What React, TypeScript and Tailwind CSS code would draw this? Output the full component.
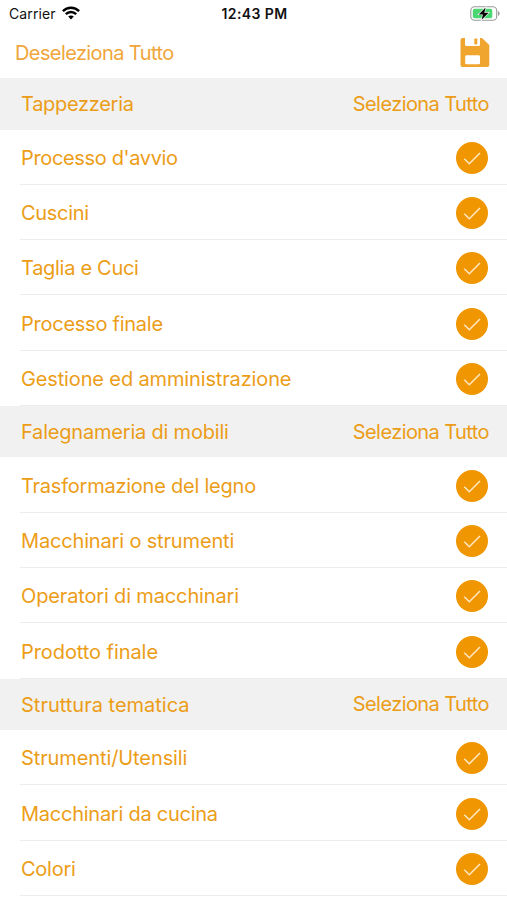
type Item = { label: string; tracking: string };
type Section = { title: string; tracking: string; items: Item[] };

const sections: Section[] = [
  {
    title: 'Tappezzeria',
    tracking: 'tracking-[-0.3px]',
    items: [
      { label: "Processo d'avvio", tracking: 'tracking-[-0.35px]' },
      { label: 'Cuscini', tracking: 'tracking-[-0.3px]' },
      { label: 'Taglia e Cuci', tracking: 'tracking-[-0.3px]' },
      { label: 'Processo finale', tracking: 'tracking-[-0.25px]' },
      { label: 'Gestione ed amministrazione', tracking: 'tracking-[-0.14px]' },
    ],
  },
  {
    title: 'Falegnameria di mobili',
    tracking: 'tracking-[-0.2px]',
    items: [
      { label: 'Trasformazione del legno', tracking: 'tracking-[-0.23px]' },
      { label: 'Macchinari o strumenti', tracking: 'tracking-[-0.16px]' },
      { label: 'Operatori di macchinari', tracking: 'tracking-[-0.15px]' },
      { label: 'Prodotto finale', tracking: 'tracking-[-0.07px]' },
    ],
  },
  {
    title: 'Struttura tematica',
    tracking: 'tracking-[0px]',
    items: [
      { label: 'Strumenti/Utensili', tracking: 'tracking-[-0.1px]' },
      { label: 'Macchinari da cucina', tracking: 'tracking-[-0.25px]' },
      { label: 'Colori', tracking: 'tracking-[-0.25px]' },
    ],
  },
];

function WifiIcon() {
  return (
    <svg width="18" height="14" viewBox="0 0 18 14" fill="none" stroke="#000" strokeWidth="2.4">
      <path d="M0.9 5.2C5.4 0.6 12.6 0.6 17.1 5.2" />
      <path d="M3.8 8.2C6.8 5.3 11.2 5.3 14.2 8.2" />
      <path d="M9 13.6L6.2 10.6C7.8 9.1 10.2 9.1 11.8 10.6Z" fill="#000" stroke="none" />
    </svg>
  );
}

function BatteryIcon() {
  return (
    <svg width="30" height="15" viewBox="0 0 30 15" fill="none">
      <rect x="0.8" y="0.8" width="25.9" height="13.4" rx="3.8" stroke="#999" strokeWidth="1.1" />
      <rect x="2.8" y="2.8" width="19.5" height="9.4" rx="2" fill="#4cd671" />
      <path d="M28 5v5c1-.4 1.6-1.4 1.6-2.5S29 5.4 28 5Z" fill="#999" />
      <path
        d="M15.6 1.4L8.7 8.4h4.2l-1.3 5.4 7-7.1h-4.3z"
        fill="#000"
        stroke="#fff"
        strokeWidth="1.2"
        paintOrder="stroke"
      />
    </svg>
  );
}

function SaveIcon() {
  return (
    <svg width="30" height="30" viewBox="0 0 30 30">
      <path
        fill="#f0a52f"
        fillRule="evenodd"
        d="M2.5 0H5v6.5Q5 8 6.5 8H18.5Q20 8 20 6.5V0H22L29.3 7V27Q29.3 29 27.3 29H2.5Q.5 29 .5 27V2Q.5 0 2.5 0ZM6.5 17.2Q5.2 17.2 5.2 18.5V25Q5.2 26.3 6.5 26.3H18.7Q20 26.3 20 25V18.5Q20 17.2 18.7 17.2Z"
      />
      <rect x="14.3" y="0.5" width="3" height="6" rx="0.8" fill="#f0a52f" />
    </svg>
  );
}

function CheckCircle() {
  return (
    <svg width="32" height="32" viewBox="0 0 32 32" fill="none">
      <circle cx="16" cy="16" r="16" fill="#f09600" />
      <path d="M8.3 16.8L13.3 21.8L24 11" stroke="#ffe9c4" strokeWidth="1.5" />
    </svg>
  );
}

export default function App() {
  return (
    <div className="h-[900px] w-[507px] overflow-hidden bg-white font-['Inter','Liberation_Sans',sans-serif] text-[20px] text-[#ec9d18]">
      <div className="grid h-[28px] grid-cols-3 items-center pb-[2px] pl-[9px] pr-[7px] text-[14px] text-[#111]">
        <div className="flex items-center gap-[6px]">
          <span className="tracking-[0.1px]">Carrier</span>
          <WifiIcon />
        </div>
        <span className="text-center text-[14px] font-semibold tracking-[0.4px]">12:43 PM</span>
        <div className="flex justify-end">
          <BatteryIcon />
        </div>
      </div>
      <header className="flex h-[50px] items-center justify-between pl-[15px] pr-[17px] text-[#f0a63a]">
        <button className="pb-[1px] tracking-[-0.6px]">Deseleziona Tutto</button>
        <button aria-label="Salva">
          <SaveIcon />
        </button>
      </header>
      {sections.map((section) => (
        <section key={section.title}>
          <div className="flex h-[51.5px] items-center justify-between bg-[#f1f1f1] pl-[21px] pr-[18px] pt-[1px]">
            <h2 className={section.tracking}>{section.title}</h2>
            <button className="pb-[1px] tracking-[-0.58px]">Seleziona Tutto</button>
          </div>
          <ul>
            {section.items.map((item) => (
              <li key={item.label} className="flex h-[55.3px] pl-[20px]">
                <div className="flex flex-1 items-center justify-between border-b border-[#ececec] pl-[1px] pr-[19.5px] pt-[2px]">
                  <span className={item.tracking}>{item.label}</span>
                  <CheckCircle />
                </div>
              </li>
            ))}
          </ul>
        </section>
      ))}
    </div>
  );
}
